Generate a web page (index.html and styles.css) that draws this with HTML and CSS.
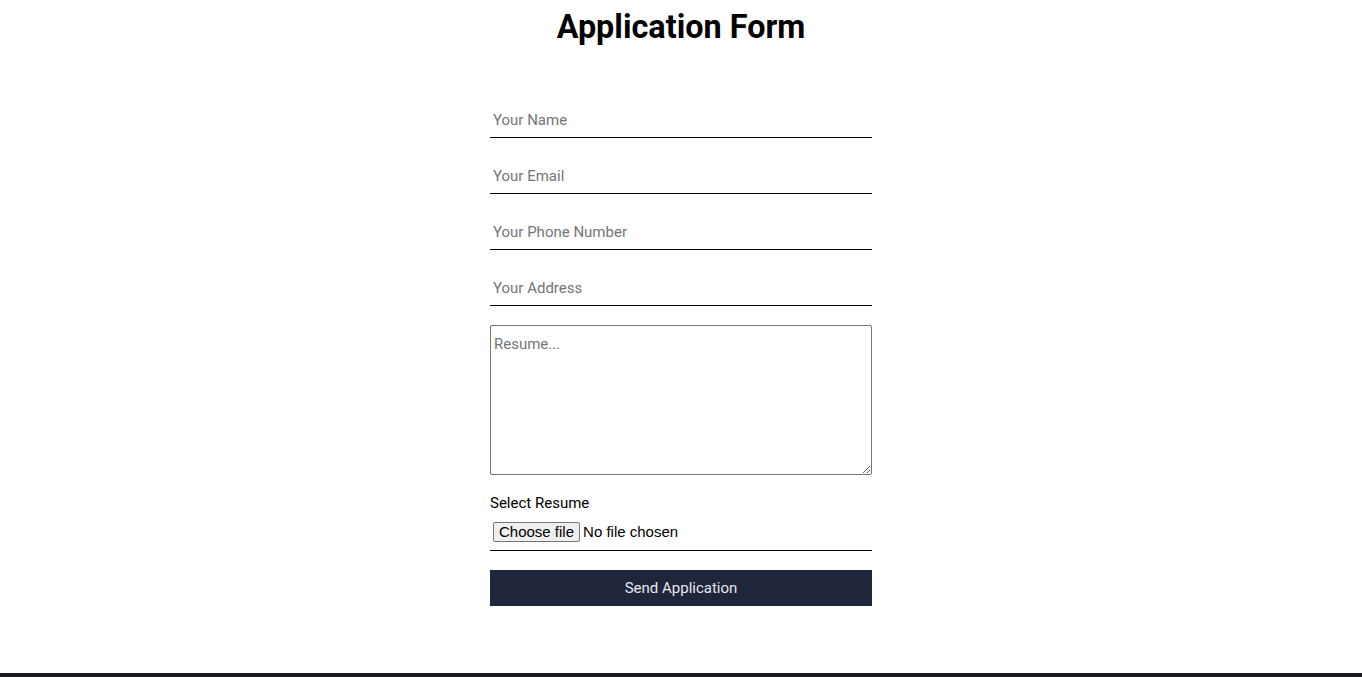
FILE: index.html
```html
<!DOCTYPE html>
<html lang="en">
<head>
  <meta charset="UTF-8" />
  <title>Application Form</title>
  <link rel="stylesheet" href="styles.css">
</head>
<body>

  <main class="page">
    <h1 class="title">Application Form</h1>

    <form class="apply-form" onsubmit="return false;">
      <input type="text" class="field" placeholder="Your Name" />
      <input type="email" class="field" placeholder="Your Email" />
      <input type="tel" class="field" placeholder="Your Phone Number" />
      <input type="text" class="field" placeholder="Your Address" />
      <textarea class="resume-text" placeholder="Resume..."></textarea>

      <div class="file-group">
        <span class="file-label">Select Resume</span>
        <label class="file-row">
          <input type="file" id="resumeFile" class="file-hidden" onchange="showFile(this)" />
          <span class="file-btn">Choose file</span>
          <span class="file-name" id="fileName">No file chosen</span>
        </label>
      </div>

      <button type="submit" class="send-btn">Send Application</button>
    </form>
  </main>

  <footer class="footer"></footer>

  <script>
    function showFile(input) {
      const name = input.files.length ? input.files[0].name : "No file chosen";
      document.getElementById("fileName").textContent = name;
    }
  </script>

</body>
</html>
```

FILE: styles.css
```css
body {
  margin: 0;
  font-family: Roboto, sans-serif;
  background: #fff;
  color: #000;
}

.page {
  display: flex;
  flex-direction: column;
  align-items: center;
  padding-bottom: 67px;
}

.title {
  font-size: 32.4px;
  font-weight: 700;
  margin: 8px 0 0;
}

.apply-form {
  width: 382px;
  display: flex;
  flex-direction: column;
  gap: 19px;
  margin-top: 55px;
}

.field {
  height: 37px;
  box-sizing: border-box;
  padding: 2px 3px 0;
  border: none;
  border-bottom: 1px solid #000;
  font-family: Roboto, sans-serif;
  font-size: 15px;
  outline: none;
}

.field::placeholder,
.resume-text::placeholder {
  color: #757575;
}

.resume-text {
  height: 150px;
  box-sizing: border-box;
  padding: 9px 3px;
  border: 1px solid #767676;
  border-radius: 2px;
  font-family: Roboto, sans-serif;
  font-size: 15px;
  resize: vertical;
}

.file-group {
  display: flex;
  flex-direction: column;
}

.file-label {
  padding-top: 2px;
  font-size: 15px;
  line-height: 14px;
}

.file-row {
  display: flex;
  align-items: center;
  gap: 3px;
  padding: 12px 3px 8px;
  border-bottom: 1px solid #000;
  font-family: "Liberation Sans", Arial, sans-serif;
  font-size: 15px;
  cursor: pointer;
}

.file-hidden {
  display: none;
}

.file-btn {
  height: 20px;
  box-sizing: border-box;
  padding: 0 5px;
  line-height: 18px;
  background: #efefef;
  border: 1px solid #767676;
  border-radius: 2px;
  color: #000;
}

.file-name {
  line-height: 20px;
}

.send-btn {
  height: 36px;
  border: none;
  background: #1f253b;
  color: #e8e8ee;
  font-family: Roboto, sans-serif;
  font-size: 15px;
  cursor: pointer;
}

.footer {
  height: 40px;
  background: #1b1c1f;
}
```
